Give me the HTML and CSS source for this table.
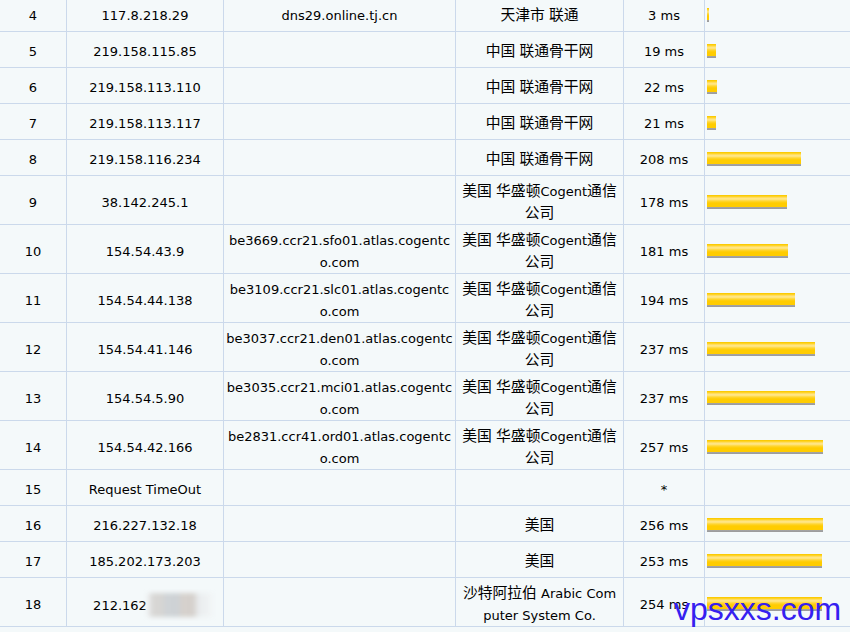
FILE: index.html
```html
<!DOCTYPE html>
<html lang="zh-CN">
<head>
<meta charset="utf-8">
<title>Traceroute</title>
<link rel="stylesheet" href="styles.css">
</head>
<body>
<table class="trace">
  <colgroup>
    <col class="c-hop"><col class="c-ip"><col class="c-host"><col class="c-loc"><col class="c-ms"><col class="c-bar">
  </colgroup>
  <tbody>
    <tr><td>4</td><td>117.8.218.29</td><td class="host">dns29.online.tj.cn</td><td class="loc"><span class="zh">天津市</span> <span class="zh">联通</span></td><td>3 ms</td><td class="bar"><span class="meter" style="width:2px"></span></td></tr>
    <tr><td>5</td><td>219.158.115.85</td><td class="host"></td><td class="loc"><span class="zh">中国</span> <span class="zh">联通骨干网</span></td><td>19 ms</td><td class="bar"><span class="meter" style="width:9px"></span></td></tr>
    <tr><td>6</td><td>219.158.113.110</td><td class="host"></td><td class="loc"><span class="zh">中国</span> <span class="zh">联通骨干网</span></td><td>22 ms</td><td class="bar"><span class="meter" style="width:10px"></span></td></tr>
    <tr><td>7</td><td>219.158.113.117</td><td class="host"></td><td class="loc"><span class="zh">中国</span> <span class="zh">联通骨干网</span></td><td>21 ms</td><td class="bar"><span class="meter" style="width:9px"></span></td></tr>
    <tr><td>8</td><td>219.158.116.234</td><td class="host"></td><td class="loc"><span class="zh">中国</span> <span class="zh">联通骨干网</span></td><td>208 ms</td><td class="bar"><span class="meter" style="width:94px"></span></td></tr>
    <tr><td>9</td><td>38.142.245.1</td><td class="host"></td><td class="loc"><span class="zh">美国</span> <span class="zh">华盛顿</span>Cogent<span class="zh">通信</span><span class="zh">公司</span></td><td>178 ms</td><td class="bar"><span class="meter" style="width:80px"></span></td></tr>
    <tr><td>10</td><td>154.54.43.9</td><td class="host">be3669.ccr21.sfo01.atlas.cogentco.com</td><td class="loc"><span class="zh">美国</span> <span class="zh">华盛顿</span>Cogent<span class="zh">通信</span><span class="zh">公司</span></td><td>181 ms</td><td class="bar"><span class="meter" style="width:81px"></span></td></tr>
    <tr><td>11</td><td>154.54.44.138</td><td class="host">be3109.ccr21.slc01.atlas.cogentco.com</td><td class="loc"><span class="zh">美国</span> <span class="zh">华盛顿</span>Cogent<span class="zh">通信</span><span class="zh">公司</span></td><td>194 ms</td><td class="bar"><span class="meter" style="width:88px"></span></td></tr>
    <tr><td>12</td><td>154.54.41.146</td><td class="host">be3037.ccr21.den01.atlas.cogentco.com</td><td class="loc"><span class="zh">美国</span> <span class="zh">华盛顿</span>Cogent<span class="zh">通信</span><span class="zh">公司</span></td><td>237 ms</td><td class="bar"><span class="meter" style="width:108px"></span></td></tr>
    <tr><td>13</td><td>154.54.5.90</td><td class="host">be3035.ccr21.mci01.atlas.cogentco.com</td><td class="loc"><span class="zh">美国</span> <span class="zh">华盛顿</span>Cogent<span class="zh">通信</span><span class="zh">公司</span></td><td>237 ms</td><td class="bar"><span class="meter" style="width:108px"></span></td></tr>
    <tr><td>14</td><td>154.54.42.166</td><td class="host">be2831.ccr41.ord01.atlas.cogentco.com</td><td class="loc"><span class="zh">美国</span> <span class="zh">华盛顿</span>Cogent<span class="zh">通信</span><span class="zh">公司</span></td><td>257 ms</td><td class="bar"><span class="meter" style="width:116px"></span></td></tr>
    <tr><td>15</td><td>Request TimeOut</td><td class="host"></td><td class="loc"></td><td>*</td><td class="bar"></td></tr>
    <tr><td>16</td><td>216.227.132.18</td><td class="host"></td><td class="loc"><span class="zh">美国</span></td><td>256 ms</td><td class="bar"><span class="meter" style="width:116px"></span></td></tr>
    <tr><td>17</td><td>185.202.173.203</td><td class="host"></td><td class="loc"><span class="zh">美国</span></td><td>253 ms</td><td class="bar"><span class="meter" style="width:115px"></span></td></tr>
    <tr><td>18</td><td>212.162<span class="masked"></span></td><td class="host"></td><td class="loc"><span class="zh">沙特阿拉伯</span> Arabic Computer System Co.</td><td>254 ms</td><td class="bar"><span class="meter" style="width:115px"></span></td></tr>
  </tbody>
</table>
<div class="watermark">vpsxxs.com</div>
</body>
</html>
```
FILE: styles.css
```css
html, body {
  margin: 0;
  padding: 0;
  background: #f4f9fa;
  overflow: hidden;
}
body {
  position: relative;
  width: 850px;
  height: 632px;
  font-family: "DejaVu Sans", "Noto Sans CJK SC", sans-serif;
  font-size: 13px;
  color: #000;
}
.trace {
  margin-top: -4px;
  width: 850px;
  table-layout: fixed;
  border-collapse: separate;
  border-spacing: 0;
}
.c-hop { width: 67px; }
.c-ip { width: 157px; }
.c-host { width: 232px; }
.c-loc { width: 168px; }
.c-ms { width: 81px; }
.c-bar { width: 145px; }

.trace td {
  box-sizing: border-box;
  height: 36px;
  padding: 5px 2px 0;
  line-height: 21.5px;
  text-align: center;
  vertical-align: middle;
  border-right: 1px solid #cbd9eb;
  border-bottom: 1px solid #cbd9eb;
  word-break: break-all;
}
.trace td.loc {
  padding-left: 4px;
  padding-right: 4px;
}
.trace td.bar {
  border-right: none;
  text-align: left;
  padding-left: 2px;
}
.zh {
  font-family: "Noto Sans CJK SC", sans-serif;
  font-size: 14.8px;
  line-height: 1;
}
.meter {
  display: inline-block;
  height: 14px;
  vertical-align: -2px;
  background: linear-gradient(to bottom,
    #f7c600 0, #ffcf0a 1px, #ffe27a 3px, #ffe88e 4px, #ffd633 6px,
    #ffcc00 8px, #ffcc00 12px, #a5a5a5 12px, #9a9a9a 14px);
}
.masked {
  display: inline-block;
  width: 65px;
  height: 24px;
  margin-right: -15px;
  vertical-align: -7px;
  background: linear-gradient(to right,
    #f0f2f3 0, #d8d7d5 6px, #d6d5d3 16px, #cfd3d6 18px, #ced2d5 32px,
    #d6d1cd 34px, #d5d0cc 46px, #eaedef 52px, #f1f4f5 65px);
  filter: blur(2px);
}
.watermark {
  position: absolute;
  left: 674px;
  top: 593px;
  font-family: "Liberation Sans", Arial, sans-serif;
  font-size: 32px;
  line-height: 32px;
  color: #3520f0;
}
```
